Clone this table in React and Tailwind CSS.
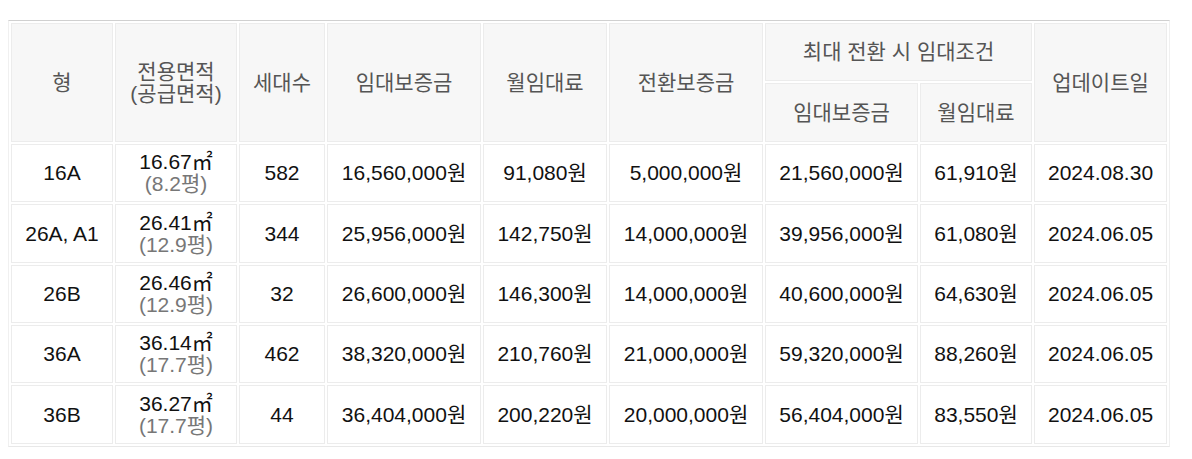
import React from "react";

const rows = [
  { t: "16A", a: "16.67", p: "8.2", n: "582", d: "16,560,000원", m: "91,080원", c: "5,000,000원", md: "21,560,000원", mm: "61,910원", u: "2024.08.30" },
  { t: "26A, A1", a: "26.41", p: "12.9", n: "344", d: "25,956,000원", m: "142,750원", c: "14,000,000원", md: "39,956,000원", mm: "61,080원", u: "2024.06.05" },
  { t: "26B", a: "26.46", p: "12.9", n: "32", d: "26,600,000원", m: "146,300원", c: "14,000,000원", md: "40,600,000원", mm: "64,630원", u: "2024.06.05" },
  { t: "36A", a: "36.14", p: "17.7", n: "462", d: "38,320,000원", m: "210,760원", c: "21,000,000원", md: "59,320,000원", mm: "88,260원", u: "2024.06.05" },
  { t: "36B", a: "36.27", p: "17.7", n: "44", d: "36,404,000원", m: "200,220원", c: "20,000,000원", md: "56,404,000원", mm: "83,550원", u: "2024.06.05" },
];

const th = "border border-[#ececec] bg-[#f7f7f7] text-[#555] font-normal text-[21px] leading-[22px] text-center align-middle p-0 whitespace-nowrap";
const td = "border border-[#ececec] bg-white text-[#111] text-[21px] leading-[22px] text-center align-middle p-0 whitespace-nowrap";

export default function App() {
  return (
    <div className="bg-white w-[1192px] h-[459px] pt-[20px] pl-[8px]" style={{ fontFamily: '"Liberation Sans", "Noto Sans CJK KR", sans-serif' }}>
      <table className="table-fixed border-separate border-spacing-[2px] w-[1160px] border-t border-t-[#d0d0d0] border-b border-b-[#e8e8e8] border-x border-x-[#f0f0f0]">
        <colgroup>
          <col className="w-[102px]" />
          <col className="w-[122px]" />
          <col className="w-[86px]" />
          <col className="w-[154px]" />
          <col className="w-[124px]" />
          <col className="w-[154px]" />
          <col className="w-[153px]" />
          <col className="w-[112px]" />
          <col className="w-[133px]" />
        </colgroup>
        <thead>
          <tr>
            <th rowSpan={2} className={th}>형</th>
            <th rowSpan={2} className={th}>
              <div>전용면적</div>
              <div>(공급면적)</div>
            </th>
            <th rowSpan={2} className={th}>세대수</th>
            <th rowSpan={2} className={th}>임대보증금</th>
            <th rowSpan={2} className={th}>월임대료</th>
            <th rowSpan={2} className={th}>전환보증금</th>
            <th colSpan={2} className={`${th} h-[58px]`}>최대 전환 시 임대조건</th>
            <th rowSpan={2} className={th}>업데이트일</th>
          </tr>
          <tr>
            <th className={`${th} h-[59px]`}>임대보증금</th>
            <th className={`${th} h-[59px]`}>월임대료</th>
          </tr>
        </thead>
        <tbody>
          {rows.map((r, i) => (
            <tr key={r.t}>
              <td className={`${td} ${i === 1 || i === 4 ? "h-[59px]" : "h-[58px]"}`}>{r.t}</td>
              <td className={td}>
                <div>{r.a}㎡</div>
                <div className="text-[#777]">({r.p}평)</div>
              </td>
              <td className={td}>{r.n}</td>
              <td className={td}>{r.d}</td>
              <td className={td}>{r.m}</td>
              <td className={td}>{r.c}</td>
              <td className={td}>{r.md}</td>
              <td className={td}>{r.mm}</td>
              <td className={td}>{r.u}</td>
            </tr>
          ))}
        </tbody>
      </table>
    </div>
  );
}
